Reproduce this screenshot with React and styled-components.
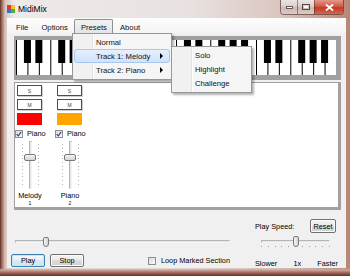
import styled, { createGlobalStyle } from 'styled-components';

const GlobalStyle = createGlobalStyle`
	html, body {
		margin: 0;
		padding: 0;
		background: #ffffff;
		font-family: 'Liberation Sans', Arial, sans-serif;
		color: #000;
	}
`;

const tracks = [
	{ name: 'Melody', num: 1, color: '#ff0000', thumb: 13 },
	{ name: 'Piano', num: 2, color: '#ffa500', thumb: 13 },
];

const presetItems = [
	{ label: 'Normal' },
	{ label: 'Track 1: Melody', sub: true, active: true },
	{ label: 'Track 2: Piano', sub: true },
];

const Keyboard = () => {
	const count = 28;
	const w = 320 / count;
	const blacks = [];
	for (let o = 0; o < 4; o++) {
		[0, 1, 3, 4, 5].forEach((b) => blacks.push((o * 7 + b + 1) * w));
	}
	return (
		<svg width="320" height="35" viewBox="0 0 320 35">
			<rect x="0" y="0" width="320" height="35" fill="#fff" />
			{Array.from({ length: count + 1 }).map((_, i) => (
				<line key={i} x1={i * w + 0.5} y1="0" x2={i * w + 0.5} y2="35" stroke="#000" strokeWidth="1" />
			))}
			{blacks.map((x, i) => (
				<rect key={i} x={x - 3.5} y="0" width="7" height="23" fill="#000" />
			))}
		</svg>
	);
};

const CheckMark = () => (
	<svg width="6" height="6" viewBox="0 0 6 6">
		<path d="M0.7 3.1 L2.3 4.9 L5.3 0.8" stroke="#2c4a8c" strokeWidth="1.2" fill="none" />
	</svg>
);

const App = () => {
	return (
		<Window>
			<GlobalStyle />
			<TitleBar>
				<AppIcon width="8" height="8" viewBox="0 0 8 8">
					<rect x="0" y="0" width="4" height="4" fill="#e23a2a" />
					<rect x="4" y="0" width="4" height="4" fill="#f2c230" />
					<rect x="0" y="4" width="4" height="4" fill="#2f6fd6" />
					<rect x="4" y="4" width="4" height="4" fill="#4cae3c" />
				</AppIcon>
				<Title>MidiMix</Title>
				<WinButtons>
					<WinButton>
						<svg width="7" height="3" viewBox="0 0 7 3">
							<rect x="0.5" y="0.5" width="6" height="2" fill="#fff" stroke="#4a3a36" strokeWidth="0.8" />
						</svg>
					</WinButton>
					<WinButton>
						<svg width="8" height="6" viewBox="0 0 8 6">
							<rect x="0.5" y="0.5" width="7" height="5" fill="none" stroke="#4a3a36" strokeWidth="0.9" />
							<rect x="2" y="2" width="4" height="2" fill="#fff" />
						</svg>
					</WinButton>
					<WinButton $close>
						<svg width="9" height="7" viewBox="0 0 9 7">
							<path d="M1 0.5 L8 6.5 M8 0.5 L1 6.5" stroke="#fff" strokeWidth="1.8" />
						</svg>
					</WinButton>
				</WinButtons>
			</TitleBar>

			<Client>
				<MenuBar>
					<MenuItem>File</MenuItem>
					<MenuItem>Options</MenuItem>
					<MenuItem $open>Presets</MenuItem>
					<MenuItem>About</MenuItem>
				</MenuBar>

				<Body>
					<PianoPanel>
						<Keyboard />
					</PianoPanel>

					<TrackPanel>
						{tracks.map((t) => (
							<TrackColumn key={t.num}>
								<SmallButton>S</SmallButton>
								<SmallButton>M</SmallButton>
								<Swatch $color={t.color} />
								<CheckLabel>
									<CheckBox>
										<CheckMark />
									</CheckBox>
									Piano
								</CheckLabel>
								<VSlider>
									<VTicks />
									<VTrack />
									<VTicks />
									<VThumb style={{ top: t.thumb }} />
								</VSlider>
								<TrackName>{t.name}</TrackName>
								<TrackNum>{t.num}</TrackNum>
							</TrackColumn>
						))}
					</TrackPanel>

					<BottomBar>
						<LeftPane>
							<HSlider>
								<HTrack />
								<HThumb style={{ left: 28 }} />
							</HSlider>
							<ButtonRow>
								<PushButton $default>Play</PushButton>
								<PushButton>Stop</PushButton>
								<LoopLabel>
									<CheckBox />
									Loop Marked Section
								</LoopLabel>
							</ButtonRow>
						</LeftPane>

						<RightPane>
							<SpeedHeader>
								<span>Play Speed:</span>
								<PushButton $small>Reset</PushButton>
							</SpeedHeader>
							<SpeedSlider>
								<HTrack />
								<TickRow>
									{Array.from({ length: 11 }).map((_, i) => (
										<Tick key={i} />
									))}
								</TickRow>
								<HThumb style={{ left: 32, top: 1, height: 11 }} />
							</SpeedSlider>
							<SpeedLabels>
								<span>Slower</span>
								<span>1x</span>
								<span>Faster</span>
							</SpeedLabels>
						</RightPane>
					</BottomBar>
				</Body>

				<Dropdown>
					{presetItems.map((item) => (
						<DropItem key={item.label} $active={item.active}>
							{item.label}
							{item.sub && <Arrow />}
						</DropItem>
					))}
				</Dropdown>

				<SubMenu>
					<DropItem>Solo</DropItem>
					<DropItem>Highlight</DropItem>
					<DropItem>Challenge</DropItem>
				</SubMenu>
			</Client>
		</Window>
	);
};

const Window = styled.div`
	width: 350px;
	height: 276px;
	box-sizing: border-box;
	display: flex;
	flex-direction: column;
	overflow: hidden;
	background:
		linear-gradient(to top, #5e3429 0, #9c6152 3px, #c9a79d 6px, rgba(0, 0, 0, 0) 8px),
		linear-gradient(to right, #5a3329 0, #a86d5c 2px, #d6c2bc 5px, #eeeae9 14px, #e8e1df 55%, #dbc6bf 80%, #b98676 100%);
`;

const TitleBar = styled.div`
	height: 18px;
	flex-shrink: 0;
	display: flex;
	align-items: flex-start;
	padding-left: 7px;
`;

const AppIcon = styled.svg`
	margin-top: 5px;
`;

const Title = styled.span`
	margin-left: 3px;
	margin-top: 4px;
	font-size: 8.5px;
	line-height: 10px;
	color: #000;
`;

const WinButtons = styled.div`
	margin-left: auto;
	margin-right: 6px;
	display: flex;
	height: 14px;
	border: 1px solid rgba(70, 40, 32, 0.6);
	border-top: none;
	border-radius: 0 0 4px 4px;
	overflow: hidden;
`;

const WinButton = styled.div`
	width: ${(p) => (p.$close ? '28px' : '16px')};
	display: flex;
	align-items: center;
	justify-content: center;
	background: ${(p) =>
		p.$close
			? 'linear-gradient(#e59a88, #d05a46 45%, #c23a28 55%, #d4664d)'
			: 'linear-gradient(#ece5e3, #dccfcb 45%, #cbb8b3 55%, #d9cbc7)'};
	& + & {
		border-left: 1px solid rgba(70, 40, 32, 0.5);
	}
`;

const Client = styled.div`
	position: relative;
	flex: 1;
	margin: 0 4px 8px 7px;
	background: #f0f0f0;
	display: flex;
	flex-direction: column;
	color: #000;
`;

const MenuBar = styled.div`
	height: 16px;
	flex-shrink: 0;
	display: flex;
	align-items: stretch;
	padding: 1px 0 0 2.5px;
	box-sizing: border-box;
	background: linear-gradient(#fdfdfd, #f3f3f3);
`;

const MenuItem = styled.div`
	padding: 0 5.5px;
	display: flex;
	align-items: center;
	font-size: 7.7px;
	color: #111;
	border: 1px solid ${(p) => (p.$open ? '#8e8f8f' : 'transparent')};
	border-bottom: none;
	background: ${(p) => (p.$open ? 'linear-gradient(#f2f2f2, #e3e3e3)' : 'transparent')};
	border-radius: 2px 2px 0 0;
`;

const Body = styled.div`
	flex: 1;
	display: flex;
	flex-direction: column;
	gap: 2px;
	padding: 2px 5px 0 7px;
`;

const PianoPanel = styled.div`
	height: 44px;
	box-sizing: border-box;
	background: #a0a0a0;
	padding: 4px 5px 5px 2px;
	display: flex;
`;

const TrackPanel = styled.div`
	height: 128px;
	box-sizing: border-box;
	background: #fff;
	border-style: solid;
	border-color: #a0a0a0;
	border-width: 1px 3px 3px 1px;
	padding: 2px 0 0 0;
	display: flex;
`;

const TrackColumn = styled.div`
	width: 40px;
	display: flex;
	flex-direction: column;
	align-items: flex-start;
`;

const SmallButton = styled.div`
	width: 25px;
	height: 11px;
	box-sizing: border-box;
	margin: 0 0 3px 2px;
	border: 1px solid #4d4d4d;
	box-shadow: 1px 1px 0 #d0d0d0;
	background: #fff;
	display: flex;
	align-items: center;
	justify-content: center;
	font-size: 5px;
	color: #3a3a5a;
`;

const Swatch = styled.div`
	width: 25px;
	height: 12px;
	margin-left: 2px;
	background: ${(p) => p.$color};
`;

const CheckLabel = styled.label`
	margin-top: 4px;
	height: 9px;
	display: flex;
	align-items: center;
	gap: 4px;
	font-size: 7.3px;
	color: #000;
	white-space: nowrap;
`;

const CheckBox = styled.span`
	width: 8px;
	height: 8px;
	box-sizing: border-box;
	border: 1px solid #8f8f8f;
	background: linear-gradient(135deg, #d8d8d8, #fbfbfb);
	display: inline-flex;
	align-items: center;
	justify-content: center;
	flex-shrink: 0;
`;

const VSlider = styled.div`
	position: relative;
	width: 30px;
	height: 48px;
	margin-top: 3px;
	display: flex;
	gap: 6px;
	padding-left: 7px;
	box-sizing: border-box;
`;

const VTicks = styled.div`
	width: 1px;
	margin: 3px 0;
	background: repeating-linear-gradient(to bottom, #b0b0b0 0 1px, transparent 1px 3.6px);
`;

const VTrack = styled.div`
	width: 3px;
	box-sizing: border-box;
	border: 1px solid #b4b4b4;
	border-right-color: #f4f4f4;
	border-bottom-color: #f4f4f4;
	background: #e6e6e6;
`;

const VThumb = styled.div`
	position: absolute;
	left: 9px;
	width: 12px;
	height: 7px;
	box-sizing: border-box;
	border: 1px solid #7a7a7a;
	border-radius: 2px;
	background: linear-gradient(#f6f6f6, #e3e3e3 50%, #d4d4d4);
`;

const TrackName = styled.div`
	width: 30px;
	margin-top: 3px;
	text-align: center;
	font-size: 7.3px;
	line-height: 8px;
`;

const TrackNum = styled.div`
	width: 30px;
	text-align: center;
	font-size: 5px;
	line-height: 6px;
`;

const BottomBar = styled.div`
	flex: 1;
	display: flex;
	margin-left: -3px;
`;

const LeftPane = styled.div`
	width: 221px;
	display: flex;
	flex-direction: column;
`;

const HSlider = styled.div`
	position: relative;
	width: 215px;
	height: 12px;
	margin: 23px 0 0 4px;
`;

const HTrack = styled.div`
	height: 3px;
	margin-top: 5px;
	box-sizing: border-box;
	border: 1px solid #b4b4b4;
	border-right-color: #f4f4f4;
	border-bottom-color: #f4f4f4;
	background: #e6e6e6;
`;

const HThumb = styled.div`
	position: absolute;
	top: 2px;
	width: 6px;
	height: 10px;
	box-sizing: border-box;
	border: 1px solid #7a7a7a;
	border-radius: 2px 2px 3px 3px;
	background: linear-gradient(to right, #f6f6f6, #e3e3e3 50%, #d4d4d4);
`;

const ButtonRow = styled.div`
	margin-top: 7px;
	display: flex;
	align-items: center;
	gap: 5px;
`;

const PushButton = styled.button`
	width: ${(p) => (p.$small ? '26px' : '34px')};
	height: ${(p) => (p.$small ? '14px' : '13px')};
	padding: 0;
	box-sizing: border-box;
	font-family: 'Liberation Sans', Arial, sans-serif;
	font-size: 7.3px;
	color: #000;
	border: 1px solid ${(p) => (p.$default ? '#3c7fb1' : '#707070')};
	border-radius: 2px;
	box-shadow: inset 0 0 0 1px ${(p) => (p.$default ? '#c8e6f8' : '#fcfcfc')};
	background: ${(p) =>
		p.$default
			? 'linear-gradient(#f4f9fd, #e6f1f9 50%, #d8e9f5 50%, #d0e4f3)'
			: 'linear-gradient(#f2f2f2, #ebebeb 50%, #dddddd 50%, #cfcfcf)'};
`;

const LoopLabel = styled.label`
	margin-left: 59px;
	display: flex;
	align-items: center;
	gap: 5px;
	font-size: 7.3px;
	color: #000;
	white-space: nowrap;
`;

const RightPane = styled.div`
	width: 83px;
	margin-left: 23px;
	padding-top: 8px;
	display: flex;
	flex-direction: column;
	font-size: 7.3px;
`;

const SpeedHeader = styled.div`
	height: 14px;
	display: flex;
	align-items: center;
	justify-content: space-between;
	padding-right: 2px;
	margin-top: -1px;
`;

const SpeedSlider = styled.div`
	position: relative;
	width: 69px;
	height: 16px;
	margin: 2px 0 0 6px;
`;

const TickRow = styled.div`
	margin-top: 3px;
	display: flex;
	justify-content: space-between;
`;

const Tick = styled.span`
	width: 1px;
	height: 1px;
	background: #9a9a9a;
`;

const SpeedLabels = styled.div`
	margin-top: 9px;
	display: flex;
	justify-content: space-between;
	line-height: 8px;
`;

const MenuPopup = styled.div`
	position: absolute;
	box-sizing: border-box;
	padding: 1px 1px 2px;
	border: 1px solid #979797;
	background: linear-gradient(to right, #f1f1f1 0 19px, #e2e3e3 19px 20px, #ffffff 20px 21px, #f5f5f5 21px);
	box-shadow: 2px 2px 2px rgba(0, 0, 0, 0.3);
	display: flex;
	flex-direction: column;
`;

const Dropdown = styled(MenuPopup)`
	left: 65px;
	top: 15px;
	width: 100px;
`;

const SubMenu = styled(MenuPopup)`
	left: 164px;
	top: 28px;
	width: 81px;
	padding-top: 1px;
`;

const DropItem = styled.div`
	height: 14px;
	box-sizing: border-box;
	display: flex;
	align-items: center;
	padding-left: 21px;
	padding-right: 6px;
	font-size: 7.7px;
	color: #111;
	border: 1px solid ${(p) => (p.$active ? '#a9c8ee' : 'transparent')};
	border-radius: 3px;
	background: ${(p) => (p.$active ? 'linear-gradient(#e6f0fd, #cfe2fb)' : 'transparent')};
`;

const Arrow = styled.span`
	margin-left: auto;
	width: 0;
	height: 0;
	border-left: 3px solid #000;
	border-top: 3px solid transparent;
	border-bottom: 3px solid transparent;
`;

export default App;
